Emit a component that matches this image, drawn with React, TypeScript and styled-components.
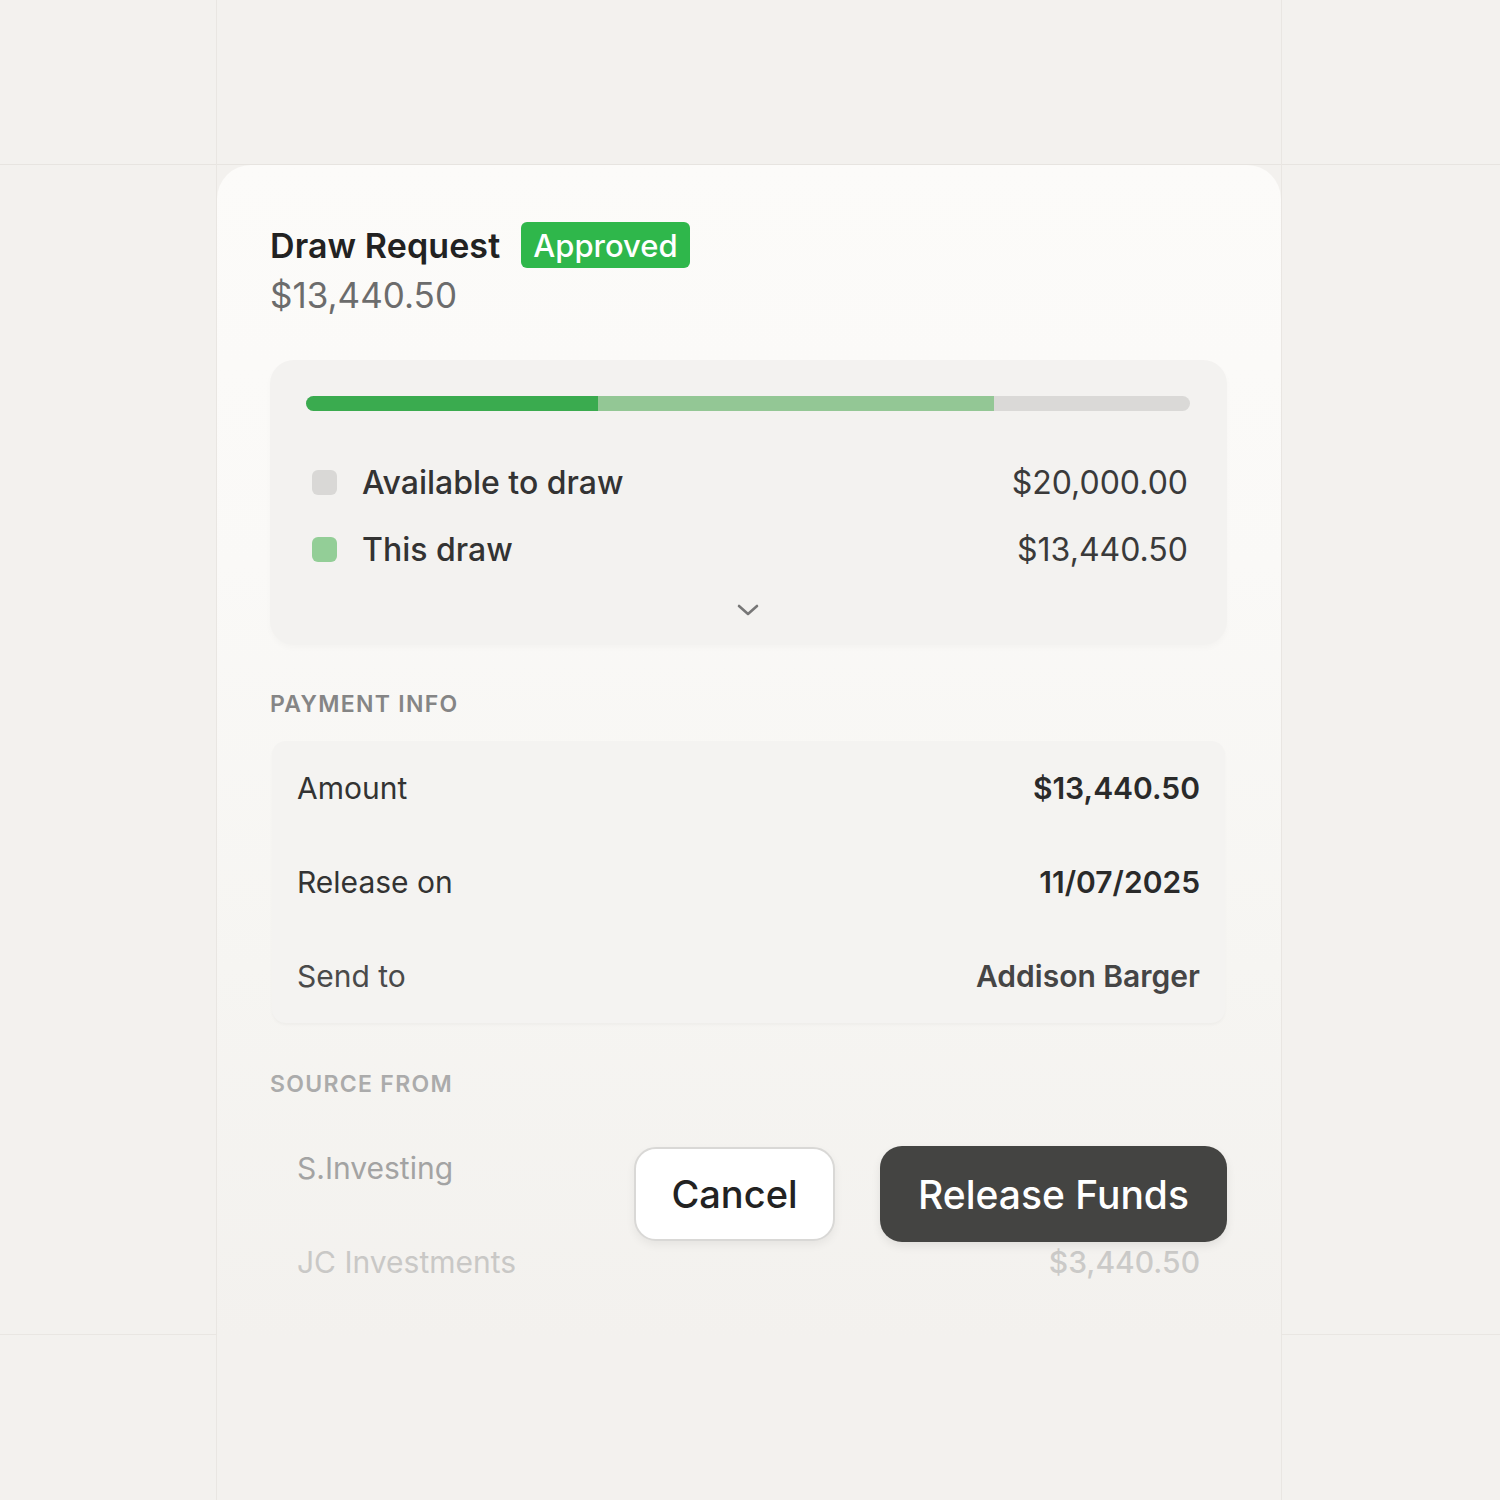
import React from "react";
import styled, { createGlobalStyle } from "styled-components";

const Global = createGlobalStyle`
  html, body { margin: 0; padding: 0; background: #f3f1ee; }
  body { font-family: Inter, "Noto Sans", "Liberation Sans", sans-serif; -webkit-font-smoothing: antialiased; }
  * { box-sizing: border-box; }
`;

const Page = styled.div`
  position: relative;
  width: 1500px;
  height: 1500px;
  overflow: hidden;
  background-color: #f3f1ee;
  background-image:
    linear-gradient(to right, transparent 216px, #e9e6e2 216px, #e9e6e2 217px, transparent 217px),
    linear-gradient(to right, transparent 1281px, #e9e6e2 1281px, #e9e6e2 1282px, transparent 1282px),
    linear-gradient(to bottom, transparent 164px, #e7e4e0 164px, #e7e4e0 165px, transparent 165px),
    linear-gradient(to bottom, transparent 1334px, #e9e6e2 1334px, #e9e6e2 1335px, transparent 1335px);
  padding-top: 165px;
  padding-left: 217px;
`;

const Card = styled.div`
  position: relative;
  width: 1064px;
  height: 1335px;
  border-radius: 34px 34px 0 0;
  background: linear-gradient(to bottom, #fcfbf9 0%, #faf9f7 30%, #f6f5f2 60%, #f3f1ee 88%);
  padding: 57px 54px 0 53px;
  display: flex;
  flex-direction: column;
`;

const Header = styled.div`
  display: flex;
  flex-direction: column;
  gap: 6px;
`;

const TitleRow = styled.div`
  display: flex;
  align-items: center;
  gap: 21px;
`;

const Title = styled.h1`
  margin: 0;
  font-size: 34px;
  font-weight: 600;
  color: #222222;
  letter-spacing: 0.1px;
`;

const Badge = styled.span`
  display: inline-flex;
  align-items: center;
  height: 46px;
  padding: 0 12px;
  border-radius: 6px;
  background: #2fb74b;
  color: #ffffff;
  font-size: 31px;
  font-weight: 500;
`;

const HeaderAmount = styled.div`
  font-size: 35px;
  font-weight: 400;
  color: #6c6c6c;
  line-height: 42px;
`;

const ProgressPanel = styled.div`
  margin-top: 44px;
  height: 285px;
  border-radius: 24px;
  background: #f3f2f0;
  box-shadow: 0 3px 6px rgba(0, 0, 0, 0.025);
  padding: 36px 37px 0 36px;
  display: flex;
  flex-direction: column;
`;

const Bar = styled.div`
  display: flex;
  height: 15px;
  border-radius: 8px;
  overflow: hidden;
  background: #dad9d7;
`;

const Segment = styled.div<{ $color: string }>`
  height: 100%;
  background: ${(p) => p.$color};
`;

const Legend = styled.div`
  margin-top: 52px;
  display: flex;
  flex-direction: column;
  gap: 29px;
`;

const LegendRow = styled.div`
  display: flex;
  align-items: center;
  height: 38px;
`;

const Swatch = styled.span<{ $color: string }>`
  width: 25px;
  height: 25px;
  border-radius: 6px;
  background: ${(p) => p.$color};
  margin-left: 6px;
  margin-right: 25px;
  flex: none;
`;

const LegendLabel = styled.span`
  flex: 1;
  font-size: 32px;
  font-weight: 500;
  color: #333333;
`;

const LegendValue = styled.span`
  font-size: 32px;
  font-weight: 400;
  color: #3a3a3a;
  margin-right: 2px;
`;

const ChevronWrap = styled.div`
  display: flex;
  justify-content: center;
  margin-top: 36px;
`;

const SectionLabel = styled.div<{ $faded?: boolean }>`
  font-size: 23px;
  font-weight: 600;
  letter-spacing: 1.3px;
  color: ${(p) => (p.$faded ? "#ababab" : "#858585")};
  line-height: 28px;
`;

const Section = styled.div<{ $top: number }>`
  margin-top: ${(p) => p.$top}px;
  display: flex;
  flex-direction: column;
  gap: 23px;
`;

const InfoPanel = styled.div`
  margin: 0 2px;
  border-radius: 14px;
  background: #f4f3f1;
  box-shadow: 0 2px 3px rgba(0, 0, 0, 0.03);
  padding: 0 25px;
  display: flex;
  flex-direction: column;
`;

const InfoRow = styled.div`
  height: 94px;
  display: flex;
  align-items: center;
  justify-content: space-between;
`;

const InfoLabel = styled.span<{ $color?: string }>`
  font-size: 30px;
  font-weight: 400;
  color: ${(p) => p.$color || "#333333"};
`;

const InfoValue = styled.span<{ $color?: string }>`
  font-size: 30px;
  font-weight: 600;
  color: ${(p) => p.$color || "#2a2a2a"};
`;

const SourcePanel = styled.div`
  margin: 0 2px;
  padding: 0 25px;
  display: flex;
  flex-direction: column;
`;

const SourceValue = styled.span<{ $color: string }>`
  font-size: 30px;
  font-weight: 500;
  color: ${(p) => p.$color};
`;

const Footer = styled.div`
  position: absolute;
  top: 981px;
  right: 54px;
  display: flex;
  align-items: center;
  gap: 45px;
`;

const CancelButton = styled.button`
  height: 94px;
  width: 201px;
  border-radius: 22px;
  background: #ffffff;
  border: 2px solid #d9d8d6;
  box-shadow: 0 4px 10px rgba(0, 0, 0, 0.06);
  font-family: inherit;
  font-size: 38px;
  font-weight: 500;
  color: #222222;
  cursor: pointer;
`;

const PrimaryButton = styled.button`
  height: 96px;
  width: 347px;
  border-radius: 22px;
  background: #444442;
  border: none;
  box-shadow: 0 4px 10px rgba(0, 0, 0, 0.08);
  font-family: inherit;
  font-size: 39px;
  font-weight: 500;
  color: #ffffff;
  cursor: pointer;
`;

const Chevron = () => (
  <svg width="22" height="12" viewBox="0 0 22 12" fill="none">
    <polyline points="2,2 11,10 20,2" stroke="#777777" strokeWidth="2.6" strokeLinecap="round" strokeLinejoin="round" />
  </svg>
);

export default function App() {
  return (
    <>
      <Global />
      <Page>
        <Card>
          <Header>
            <TitleRow>
              <Title>Draw Request</Title>
              <Badge>Approved</Badge>
            </TitleRow>
            <HeaderAmount>$13,440.50</HeaderAmount>
          </Header>

          <ProgressPanel>
            <Bar>
              <Segment $color="#3aab4f" style={{ width: "33%" }} />
              <Segment $color="#93c795" style={{ width: "44.8%" }} />
            </Bar>
            <Legend>
              <LegendRow>
                <Swatch $color="#d9d8d6" />
                <LegendLabel>Available to draw</LegendLabel>
                <LegendValue>$20,000.00</LegendValue>
              </LegendRow>
              <LegendRow>
                <Swatch $color="#93ce97" />
                <LegendLabel>This draw</LegendLabel>
                <LegendValue>$13,440.50</LegendValue>
              </LegendRow>
            </Legend>
            <ChevronWrap>
              <Chevron />
            </ChevronWrap>
          </ProgressPanel>

          <Section $top={45}>
            <SectionLabel>PAYMENT INFO</SectionLabel>
            <InfoPanel>
              <InfoRow>
                <InfoLabel>Amount</InfoLabel>
                <InfoValue>$13,440.50</InfoValue>
              </InfoRow>
              <InfoRow>
                <InfoLabel>Release on</InfoLabel>
                <InfoValue>11/07/2025</InfoValue>
              </InfoRow>
              <InfoRow>
                <InfoLabel $color="#4a4a4a">Send to</InfoLabel>
                <InfoValue $color="#454545">Addison Barger</InfoValue>
              </InfoRow>
            </InfoPanel>
          </Section>

          <Section $top={47}>
            <SectionLabel $faded>SOURCE FROM</SectionLabel>
            <SourcePanel>
              <InfoRow>
                <InfoLabel $color="#a3a3a3">S.Investing</InfoLabel>
              </InfoRow>
              <InfoRow>
                <InfoLabel $color="#c9c8c6">JC Investments</InfoLabel>
                <SourceValue $color="#cbcac8">$3,440.50</SourceValue>
              </InfoRow>
            </SourcePanel>
          </Section>

          <Footer>
            <CancelButton>Cancel</CancelButton>
            <PrimaryButton>Release Funds</PrimaryButton>
          </Footer>
        </Card>
      </Page>
    </>
  );
}
